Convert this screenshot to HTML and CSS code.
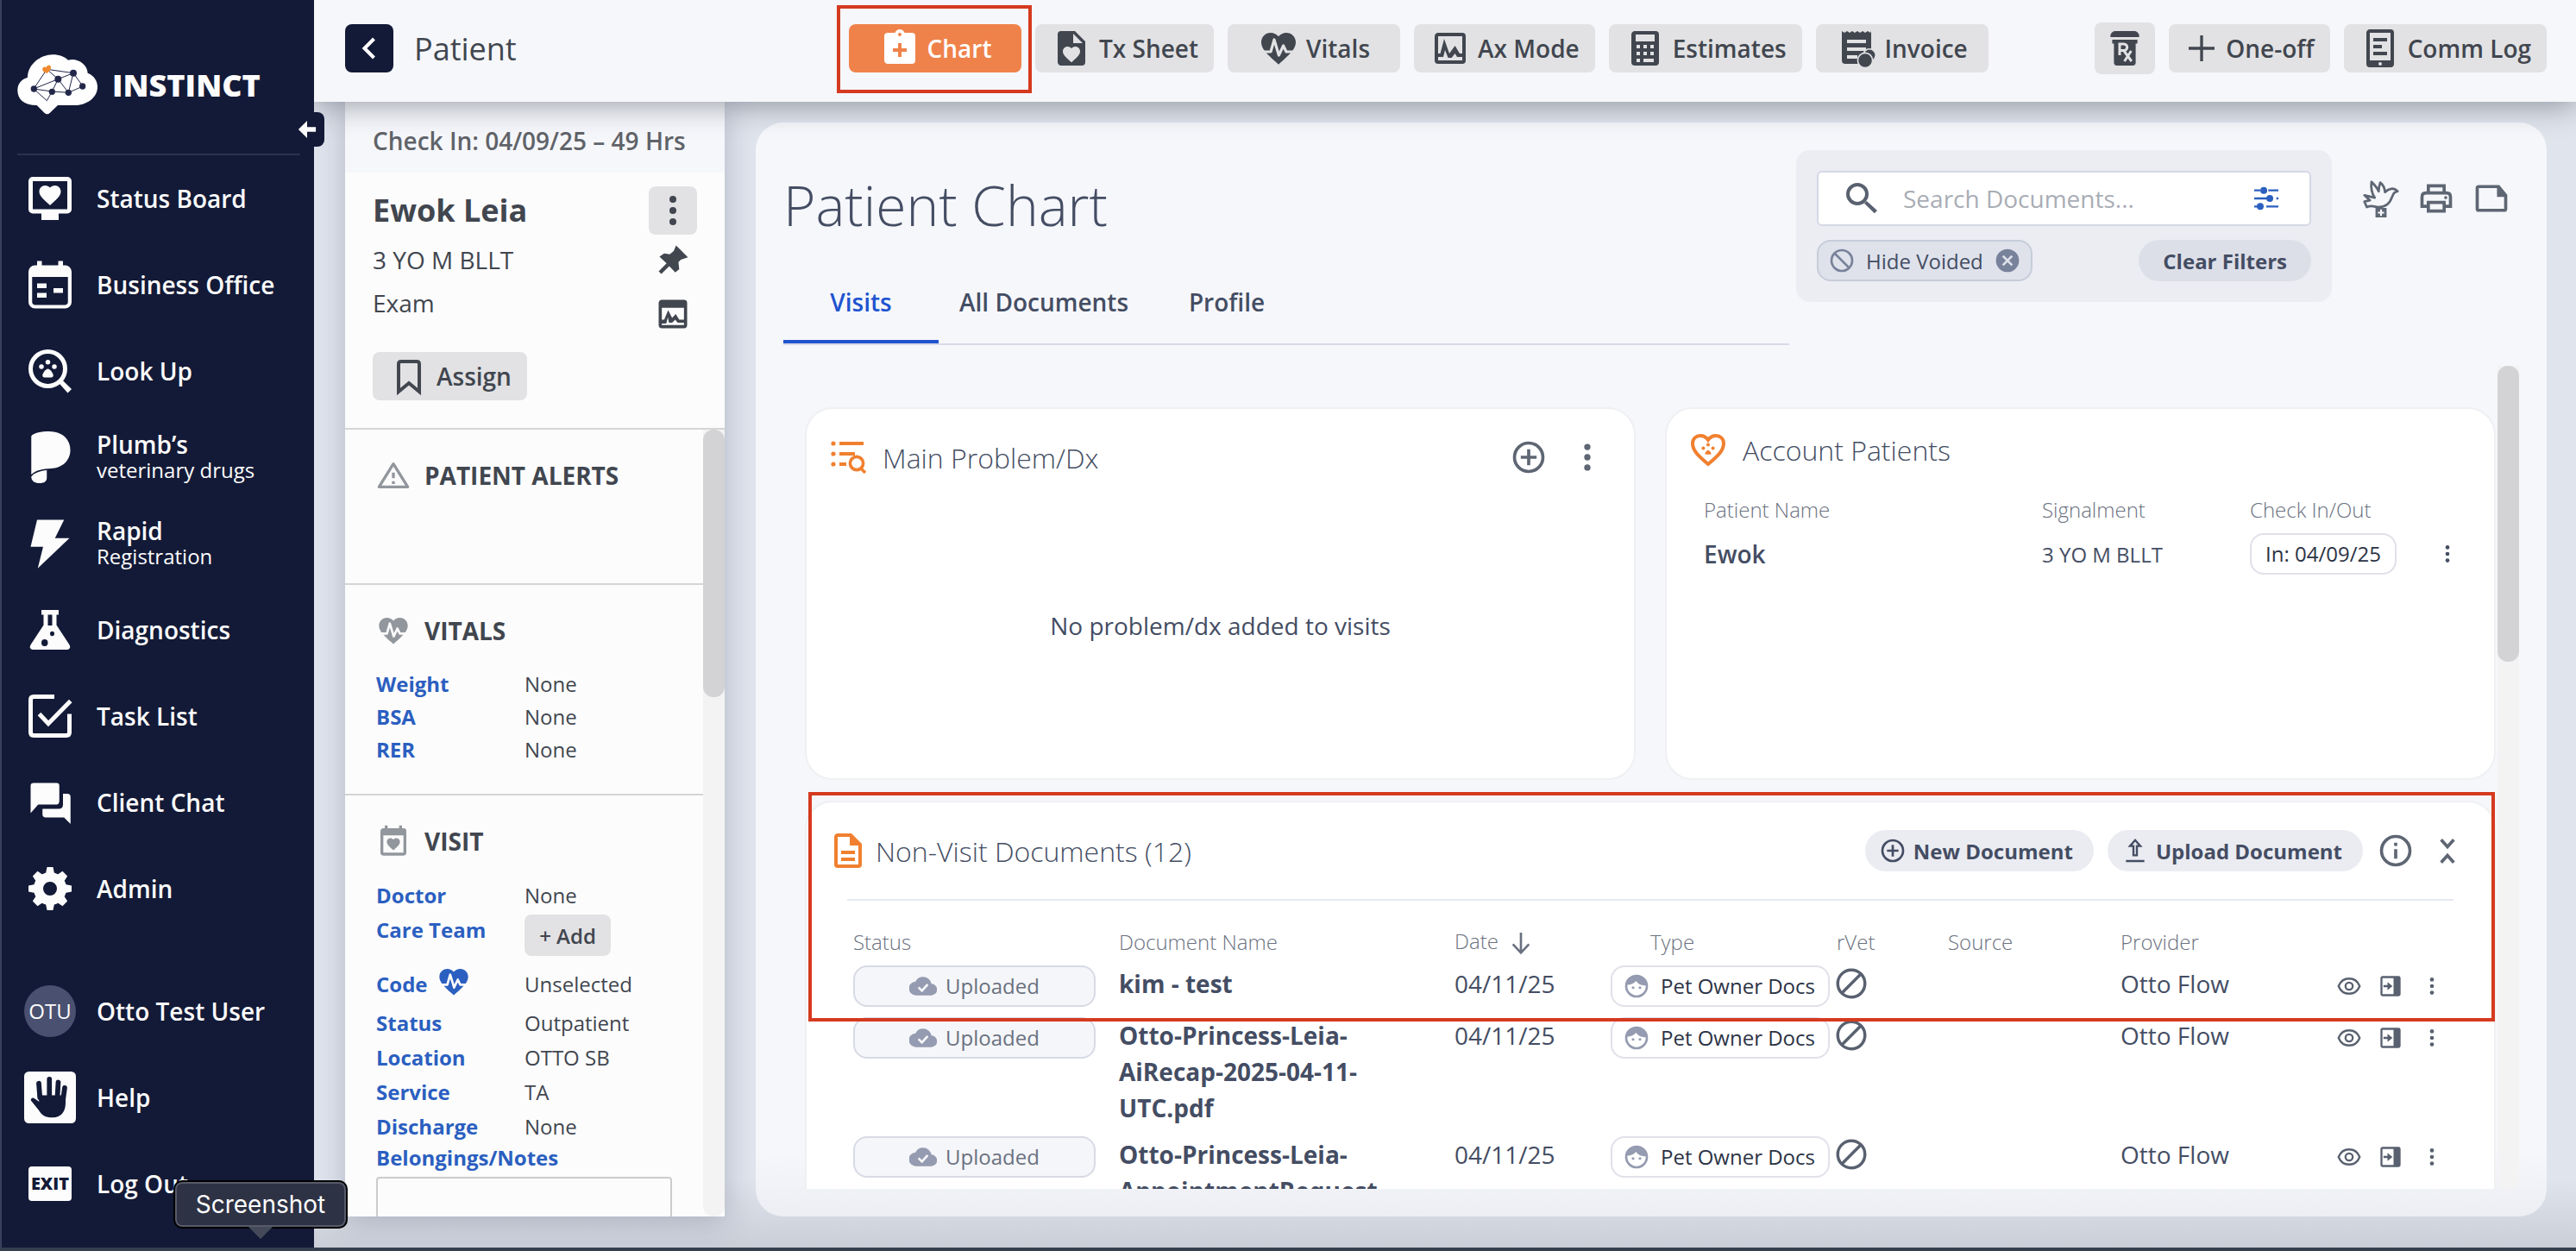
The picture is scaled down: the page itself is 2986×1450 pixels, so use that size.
FILE: index.html
```html
<!DOCTYPE html>
<html lang="en">
<head>
    <meta charset="UTF-8">
    <meta name="viewport" content="width=device-width, initial-scale=1.0">
    <title>Patient Chart</title>
    <link rel="stylesheet" href="styles.css">
</head>
<body>
    <!-- icon sprite -->
    <svg class="sprite" aria-hidden="true">
        <symbol id="i-heart" viewBox="0 0 24 24"><path d="M12 21.35 10.55 20C5.4 15.36 2 12.27 2 8.5 2 5.41 4.42 3 7.5 3c1.74 0 3.41.81 4.5 2.08C13.09 3.81 14.76 3 16.5 3 19.58 3 22 5.41 22 8.5c0 3.77-3.4 6.86-8.55 11.5z"/></symbol>
        <symbol id="i-board" viewBox="0 0 24 24">
            <path fill-rule="evenodd" d="M4 2h16a2 2 0 0 1 2 2v13a2 2 0 0 1-2 2h-4v3H8v-3H4a2 2 0 0 1-2-2V4a2 2 0 0 1 2-2zm0 2v13h16V4z"/>
            <use href="#i-heart" x="6" y="4.500" width="12" height="12"/>
        </symbol>
        <symbol id="i-office" viewBox="0 0 24 24"><path fill-rule="evenodd" d="M6 1h2.200v2h7.600V1H18v2h1a3 3 0 0 1 3 3v14a3 3 0 0 1-3 3H5a3 3 0 0 1-3-3V6a3 3 0 0 1 3-3h1zM3.700 8.400V20c0 .8.600 1.400 1.400 1.400h13.800c.8 0 1.400-.6 1.400-1.400V8.400zM6 11.400h4.400v2.200H6zm0 4.400h4.400V18H6zm7.600-2.200H18v2.200h-4.400z"/></symbol>
        <symbol id="i-lookup" viewBox="0 0 24 24">
            <circle cx="11" cy="11" r="8" fill="none" stroke="currentColor" stroke-width="2"/>
            <path d="m16.200 17.700 1.500-1.500 4.300 4.200-1.800 1.800z"/>
            <circle cx="11" cy="7.900" r="1.100"/><circle cx="8" cy="10" r="1.100"/><circle cx="14" cy="10" r="1.100"/>
            <path d="M11 11c1 0 2.500 2.200 2.500 3s-.6 1-1.200 1H9.700c-.7 0-1.200-.2-1.200-1s1.500-3 2.500-3z"/>
        </symbol>
        <symbol id="i-plumbs" viewBox="0 0 24 24">
            <path d="M3.300 2.200C4.500.6 8 0 11.500 0 17.600 0 21.400 3.600 21.400 8.700c0 5-3.900 8.300-8.900 8.500-3.600.2-7 .7-9.200 2.800z"/>
            <path d="M3.300 21c1.600-2 4.200-2.700 7.200-3v3.500c0 1.700-1.200 2.500-3.400 2.500s-3.800-1-3.800-3z"/>
        </symbol>
        <symbol id="i-bolt" viewBox="0 0 24 24"><path d="M6 1h12.500l-4.200 8.500H21L6.300 23.500l2.500-10H3z"/></symbol>
        <symbol id="i-flask" viewBox="0 0 24 24"><path fill-rule="evenodd" d="M8 2.800h8V5h-1v4.800l5.900 9c1 1.600 0 2.400-1.500 2.400H4.600c-1.500 0-2.500-.8-1.500-2.400l5.900-9V5H8zM11 5v5h2V5zm2 7.700a1 1.100 0 1 0 0 2.200 1 1.100 0 0 0 0-2.200zm-3.500 3.700a1.500 1.600 0 1 0 0 3.200 1.500 1.600 0 0 0 0-3.200z"/></symbol>
        <symbol id="i-task" viewBox="0 0 24 24"><path fill="none" stroke="currentColor" stroke-width="2" d="M14 3H4.500Q3 3 3 4.500v15Q3 21 4.500 21h15q1.500 0 1.500-1.500V11M7 11l4.200 4.500L21.500 5"/></symbol>
        <symbol id="i-chat" viewBox="0 0 24 24"><path d="M4.500 3H15q1.300 0 1.300 1.300v7Q16.300 13 15 13H6.500L3 17V4.300Q3 3 4.500 3zM18 8h2q1.500 0 1.500 1.500V22l-3-3H10q-1.500 0-1.500-1.500V15H16q2 0 2-2z"/></symbol>
        <symbol id="i-gear" viewBox="0 0 24 24">
            <path d="m9.800 6 .8-4h2.800l.8 4zm4.400 12-.8 4h-2.800l-.8-4z"/>
            <path transform="rotate(90 12 12)" d="m9.800 6 .8-4h2.800l.8 4zm4.400 12-.8 4h-2.800l-.8-4z"/>
            <path transform="rotate(45 12 12)" d="m9.600 6 .8-3.800h3.200l.8 3.800zm4.800 12-.8 3.800h-3.200L9.600 18z"/>
            <path transform="rotate(135 12 12)" d="m9.600 6 .8-3.800h3.200l.8 3.800zm4.800 12-.8 3.800h-3.200L9.600 18z"/>
            <circle cx="12" cy="12" r="5.400" fill="var(--cut)" stroke="currentColor" stroke-width="4.400"/>
        </symbol>
        <symbol id="i-hand" viewBox="0 0 24 24">
            <rect width="24" height="24" rx="2.200"/>
            <path d="M7.300 12 6.800 5.500M11.700 12V3.500M15.400 12l.4-7M18 13.500l.8-6" fill="none" stroke="var(--cut)" stroke-width="2.300" stroke-linecap="round"/>
            <path fill="var(--cut)" d="M6.200 11h13v3.500c0 4-2 6.800-6 6.800-3.500 0-5-1-6.500-3.500L3.200 13.500c-.4-1 .8-1.700 1.600-1L7 14z"/>
        </symbol>
        <symbol id="i-clip" viewBox="0 0 24 24"><path fill-rule="evenodd" d="M19 3h-4.180C14.400 1.840 13.300 1 12 1s-2.400.84-2.820 2H5a2 2 0 0 0-2 2v14c0 1.100.9 2 2 2h14a2 2 0 0 0 2-2V5a2 2 0 0 0-2-2zm-7 0a1 1 0 1 1 0 2 1 1 0 0 1 0-2zm-1 6h2v3h3v2h-3v3h-2v-3H8v-2h3z"/></symbol>
        <symbol id="i-tx" viewBox="0 0 24 24">
            <path fill-rule="evenodd" d="M14 2H6a2 2 0 0 0-2 2v16c0 1.100.9 2 2 2h12a2 2 0 0 0 2-2V8zm-1 1.500L18.500 9H13z"/>
            <use href="#i-heart" x="6" y="9.500" width="12" height="12" fill="var(--cut)"/>
        </symbol>
        <symbol id="i-pulse" viewBox="0 0 24 24">
            <use href="#i-heart" width="24" height="24"/>
            <path fill="none" stroke="var(--cut)" stroke-width="1.600" stroke-linejoin="round" d="M1 14h6.500L9.500 7l2.700 9 2.600-5.500L16.500 14H23"/>
        </symbol>
        <symbol id="i-ax" viewBox="0 0 24 24"><path fill-rule="evenodd" d="M5 3h14a2 2 0 0 1 2 2v14a2 2 0 0 1-2 2H5a2 2 0 0 1-2-2V5c0-1.100.9-2 2-2zm0 2v10h1.300L8.500 6.500 11.500 15l3.300-4.500L17.500 15H19V5zm0 12v2h14v-2h-3l-1.200-2-2 2.500h-2L9 13l-1 4z"/></symbol>
        <symbol id="i-wave" viewBox="0 0 24 24"><path fill-rule="evenodd" d="M5 3h14a2 2 0 0 1 2 2v14a2 2 0 0 1-2 2H5a2 2 0 0 1-2-2V5c0-1.100.9-2 2-2zm0 5v7.500h1.500L9 9.500l2.500 5 2.300-2.500 2.200 3.500h3V8zm0 10v1h14v-1.500h-4l-1.500-2-2 2h-2L8.800 14l-1 4z"/></symbol>
        <symbol id="i-calc" viewBox="0 0 24 24"><path fill-rule="evenodd" d="M6 2h12a2 2 0 0 1 2 2v16a2 2 0 0 1-2 2H6a2 2 0 0 1-2-2V4c0-1.100.9-2 2-2zm.5 2v4h11V4zM7 10v2h2v-2zm4 0v2h2v-2zm4 0v2h2v-2zm-8 4v2h2v-2zm4 0v2h2v-2zm4 0v2h2v-2zm-8 4v2h2v-2zm4 0v2h6v-2z"/></symbol>
        <symbol id="i-invoice" viewBox="0 0 24 24">
            <path fill-rule="evenodd" d="m3 2 1.500 1L6 2l1.500 1L9 2l1.500 1L12 2l1.500 1L15 2l1.500 1L18 2l1.500 1 .5-1v19H5a2 2 0 0 1-2-2zm3 5v2h11V7zm0 4.500v2h11v-2zM6 16v2h6v-2z"/>
            <circle cx="19" cy="16" r="3.600" stroke="var(--cut)" stroke-width=".8"/><circle cx="16.500" cy="19" r="4.300" stroke="var(--cut)" stroke-width=".8"/>
        </symbol>
        <symbol id="i-rx" viewBox="0 0 24 24">
            <path d="M3.700 5.500V4.300Q4.500 2 6.500 2h11q2 0 2.800 2.300v1.200zM4.700 7h14.600v2.300h-1v11q0 1.700-1.700 1.700H7.400q-1.700 0-1.700-1.700v-11h-1z"/>
            <path fill="none" stroke="var(--cut)" stroke-width="1.500" d="M9 16V9.500h2.500a1.800 1.800 0 0 1 0 3.700H9m2.300 0 4.600 6.300m-.2-6L11.800 19.500"/>
        </symbol>
        <symbol id="i-plus" viewBox="0 0 24 24"><path d="M11 3h2v8h8v2h-8v8h-2v-8H3v-2h8z"/></symbol>
        <symbol id="i-comm" viewBox="0 0 24 24"><path fill-rule="evenodd" d="M6 1h12a2 2 0 0 1 2 2v18a2 2 0 0 1-2 2H6a2 2 0 0 1-2-2V3c0-1.100.9-2 2-2zm0 2v16h12V3zm2 3h8v2H8zm0 4h5v2H8zm0 4h8v2H8zm4 6a1 1 0 1 0 0 2 1 1 0 0 0 0-2z"/></symbol>
        <symbol id="i-back" viewBox="0 0 24 24"><path fill="none" stroke="currentColor" stroke-width="2.200" d="m15 6-6 6 6 6"/></symbol>
        <symbol id="i-dots" viewBox="0 0 24 24"><circle cx="12" cy="5.500" r="2"/><circle cx="12" cy="12" r="2"/><circle cx="12" cy="18.500" r="2"/></symbol>
        <symbol id="i-pin" viewBox="0 0 24 24"><path d="m14 2.500 7.500 7.500-4.500 1.500-1.500 1.500.5 4.500-2.500 2-3.800-4-5 5-1.700-1.700 5-5-4.500-4.300 3-2 3.500.5L12.500 6z"/></symbol>
        <symbol id="i-bookmark" viewBox="0 0 24 24"><path fill="none" stroke="currentColor" stroke-width="2" d="M6 21V5q0-1.500 1.500-1.500h9Q18 3.500 18 5v16l-6-5z"/></symbol>
        <symbol id="i-alert" viewBox="0 0 24 24"><path fill="none" stroke="currentColor" stroke-width="2" stroke-linejoin="round" d="M12 4 2 20h20zM12 10v4M12 16v2"/></symbol>
        <symbol id="i-visit" viewBox="0 0 24 24">
            <path fill-rule="evenodd" d="M6 1h2v2h8V1h2v2h1a2 2 0 0 1 2 2v15a2 2 0 0 1-2 2H5a2 2 0 0 1-2-2V5c0-1.100.9-2 2-2h1zM5 8v12h14V8z"/>
            <use href="#i-heart" x="6.500" y="8.500" width="11" height="11"/>
        </symbol>
        <symbol id="i-search" viewBox="0 0 24 24"><circle cx="9.500" cy="9.500" r="5.500" fill="none" stroke="currentColor" stroke-width="2"/><path d="m13.500 14.900 1.400-1.400 6.100 5.500-1.600 1.600z"/></symbol>
        <symbol id="i-tune" viewBox="0 0 24 24"><path d="M0 3h6v2H0zM14 3h10v2H14zM0 11h13v2H0zM22 11h2v2h-2zM0 19h4v2H0zM12 19h12v2H12z"/><circle cx="9.500" cy="4" r="3.400"/><circle cx="15.500" cy="12" r="3.400"/><circle cx="6" cy="20" r="3.400"/></symbol>
        <symbol id="i-void" viewBox="0 0 24 24"><path fill="none" stroke="currentColor" stroke-width="2" d="M12 3a9 9 0 1 1 0 18 9 9 0 0 1 0-18zM5.600 5.600l12.800 12.800"/></symbol>
        <symbol id="i-none" viewBox="0 0 24 24"><path fill="none" stroke="currentColor" stroke-width="2" d="M12 3a9 9 0 1 1 0 18 9 9 0 0 1 0-18zM18.400 5.600 5.600 18.400"/></symbol>
        <symbol id="i-close" viewBox="0 0 24 24"><circle cx="12" cy="12" r="10"/><path stroke="var(--cut)" stroke-width="2" d="m8 8 8 8m0-8-8 8"/></symbol>
        <symbol id="i-dove" viewBox="0 0 24 24">
            <path fill="none" stroke="currentColor" stroke-width="1.500" stroke-linejoin="round" d="M1.500 10 8 11.500C6 8.500 5.500 5 6 1.500c2 2 3.500 3.500 4.500 6C10.500 5 11 3.500 11.500 2c2 1.500 2.800 3.500 3 6 2.500-2.500 5.500-3 8-.5-2 .5-2.500 1-3.500 3.500-1.500 4.500-4.500 6.500-8.500 6.500-3 0-4-1.500-7.500 0L1.500 14l3.500-.8z"/>
            <path fill-rule="evenodd" d="M8.500 18h7v6h-7zm2.900 1v1.400H10v1.200h1.400V23h1.200v-1.400H14v-1.200h-1.400V19z"/>
        </symbol>
        <symbol id="i-print" viewBox="0 0 24 24"><path fill="none" stroke="currentColor" stroke-width="2" d="M7 8V4h10v4M7 17H3v-6q0-2.500 2.500-2.500h13Q21 8.500 21 11v6h-4M7 14.500h10V20H7z"/><circle cx="18" cy="11.500" r="1"/></symbol>
        <symbol id="i-note" viewBox="0 0 24 24"><path fill="none" stroke="currentColor" stroke-width="2" d="M4 4.500h12.500L21 10v8.500q0 1-1 1H4q-1 0-1-1v-13q0-1 1-1z"/><path d="M15.500 4.500V11H21z"/></symbol>
        <symbol id="i-problem" viewBox="0 0 24 24"><path d="M7 3h14v2H7zM7 9h9v2H7zM7 15h4v2H7z"/><circle cx="3.500" cy="4" r="1.300"/><circle cx="3.500" cy="10" r="1.300"/><circle cx="3.500" cy="16" r="1.300"/><circle cx="17" cy="15.500" r="3.800" fill="none" stroke="currentColor" stroke-width="1.800"/><path stroke="currentColor" stroke-width="1.800" d="m19.500 18.500 2.500 2.500"/></symbol>
        <symbol id="i-addcircle" viewBox="0 0 24 24"><path fill="none" stroke="currentColor" stroke-width="2" d="M12 3a9 9 0 1 1 0 18 9 9 0 0 1 0-18zM12 7v10M7 12h10"/></symbol>
        <symbol id="i-petheart" viewBox="0 0 24 24">
            <path fill="none" stroke="currentColor" stroke-width="2" d="M12 20.500C6 15.500 3 12.500 3 8.500 3 5.700 5 4 7.500 4 9.500 4 11 5 12 6.500 13 5 14.500 4 16.500 4 19 4 21 5.700 21 8.500c0 4-3 7-9 12z"/>
            <circle cx="12" cy="9.300" r="1"/><circle cx="9.200" cy="11.200" r="1"/><circle cx="14.800" cy="11.200" r="1"/><path d="M12 12.300q2 1.200 1.700 2.600h-3.400Q10 13.500 12 12.300z"/>
        </symbol>
        <symbol id="i-doc" viewBox="0 0 24 24"><path fill-rule="evenodd" d="M6 2h8l6 6v12a2 2 0 0 1-2 2H6a2 2 0 0 1-2-2V4c0-1.100.9-2 2-2zm0 2v16h12V9h-5V4zm2 8h8v2H8zm0 4h8v2H8z"/></symbol>
        <symbol id="i-upload" viewBox="0 0 24 24"><path fill="none" stroke="currentColor" stroke-width="1.800" d="M10.500 16V8H7.500L12 2.800 16.500 8h-3v8zM4 21h16"/></symbol>
        <symbol id="i-info" viewBox="0 0 24 24"><path fill="none" stroke="currentColor" stroke-width="2" d="M12 3a9 9 0 1 1 0 18 9 9 0 0 1 0-18zM12 11v6M12 7v2"/></symbol>
        <symbol id="i-collapse" viewBox="0 0 24 24"><path fill="none" stroke="currentColor" stroke-width="2" d="m8 5 4 4.500L16 5M8 19.500l4-4.500 4 4.500"/></symbol>
        <symbol id="i-down" viewBox="0 0 24 24"><path fill="none" stroke="currentColor" stroke-width="2" d="M12 3v17M5 13l7 7.500L19 13"/></symbol>
        <symbol id="i-cloud" viewBox="0 0 24 24"><path d="M19.300 10A7.500 7.500 0 0 0 12 4a7.500 7.500 0 0 0-6.600 4A6 6 0 0 0 6 20h13a5 5 0 0 0 .3-10z"/><path fill="none" stroke="var(--cut)" stroke-width="2" d="m8 13 3 3 5-5.500"/></symbol>
        <symbol id="i-face" viewBox="0 0 24 24"><circle cx="12" cy="12" r="9" fill="none" stroke="currentColor" stroke-width="2"/><path d="M3 11C3 6 7 3 12 3s9 4 9 8.500c-4 0-7-.5-9.500-4C10 9.500 7 11 3 11z"/><circle cx="9" cy="13.300" r="1.200"/><circle cx="15" cy="13.300" r="1.200"/></symbol>
        <symbol id="i-eye" viewBox="0 0 24 24"><path fill="none" stroke="currentColor" stroke-width="2" d="M1.500 12c2-5 5.500-7.500 10.500-7.500S20.500 7 22.500 12c-2 5-5.500 7.500-10.500 7.500S3.500 17 1.500 12z"/><circle cx="12" cy="12" r="3.600" fill="none" stroke="currentColor" stroke-width="2"/></symbol>
        <symbol id="i-open" viewBox="0 0 24 24"><path fill-rule="evenodd" d="M4 2h16a2 2 0 0 1 2 2v16a2 2 0 0 1-2 2H4a2 2 0 0 1-2-2V4c0-1.100.9-2 2-2zm0 2v16h11V4zm1 7h4V8l5 4-5 4v-3H5z"/></symbol>
        <symbol id="i-arrow" viewBox="0 0 24 24"><path d="M1 12 12 1v8h11v6H12v8z"/></symbol>
    </svg>

    <div class="app">
        <aside class="sidebar">
            <div class="brand">
                <svg class="brand-mark" viewBox="62 70 282 210">
                    <path fill="#fff" d="M98 150c0-45 45-79 87-79 24 0 42 8 54 19 32-8 66 14 68 45 24 9 34 30 34 48 0 40-41 64-79 64h-59l-28 27q-9 8-18 0l-27-27c-45 0-67-22-67-52 0-24 15-39 35-45z"/>
                    <path class="brand-net" d="m165 122 92 13 33 46-50 22-57-4-64-9 46-68 39 34-85 34 46 41 18-32 21-43 53-21-17 68-36-47"/>
                    <g fill="#23284a"><circle cx="204" cy="156" r="12"/><circle cx="257" cy="135" r="12"/><circle cx="289" cy="181" r="11"/><circle cx="240" cy="203" r="11"/><circle cx="183" cy="200" r="11"/><circle cx="120" cy="190" r="11"/></g>
                    <path fill="#f08a30" d="M166 135c-14 0-22-16-12-21 4-2 8 1 9 2 2-9 12-11 15-5 4 8-3 18-12 24z"/>
                </svg>
                <span class="brand-name">INSTINCT</span>
            </div>
            <button class="collapse" aria-label="Collapse menu"><svg><use href="#i-arrow"/></svg></button>
            <nav class="menu">
                <a href="#"><svg><use href="#i-board"/></svg><span>Status Board</span></a>
                <a href="#"><svg><use href="#i-office"/></svg><span>Business Office</span></a>
                <a href="#"><svg><use href="#i-lookup"/></svg><span>Look Up</span></a>
                <a href="#"><svg><use href="#i-plumbs"/></svg><span>Plumb’s<small>veterinary drugs</small></span></a>
                <a href="#"><svg><use href="#i-bolt"/></svg><span>Rapid<small>Registration</small></span></a>
                <a href="#"><svg><use href="#i-flask"/></svg><span>Diagnostics</span></a>
                <a href="#"><svg><use href="#i-task"/></svg><span>Task List</span></a>
                <a href="#"><svg><use href="#i-chat"/></svg><span>Client Chat</span></a>
                <a href="#"><svg><use href="#i-gear"/></svg><span>Admin</span></a>
            </nav>
            <nav class="menu menu-user">
                <a href="#"><span class="avatar">OTU</span><span>Otto Test User</span></a>
                <a href="#"><svg><use href="#i-hand"/></svg><span>Help</span></a>
                <a href="#"><span class="exit"><b>EXIT</b></span><span>Log Out</span></a>
            </nav>
        </aside>

        <div class="page">
            <header class="topbar">
                <div class="topbar-title">
                    <button class="back" aria-label="Back"><svg><use href="#i-back"/></svg></button>
                    <span>Patient</span>
                </div>
                <nav class="modes">
                    <div class="marked">
                        <button class="btn active"><svg><use href="#i-clip"/></svg>Chart</button>
                        <div class="mark mark-chart"></div>
                    </div>
                    <button class="btn"><svg><use href="#i-tx"/></svg>Tx Sheet</button>
                    <button class="btn"><svg><use href="#i-pulse"/></svg>Vitals</button>
                    <button class="btn"><svg><use href="#i-ax"/></svg>Ax Mode</button>
                    <button class="btn"><svg><use href="#i-calc"/></svg>Estimates</button>
                    <button class="btn"><svg><use href="#i-invoice"/></svg>Invoice</button>
                </nav>
                <div class="actions">
                    <button class="btn btn-rx" aria-label="Prescriptions"><svg><use href="#i-rx"/></svg></button>
                    <button class="btn btn-small"><svg><use href="#i-plus"/></svg>One-off</button>
                    <button class="btn btn-small"><svg class="wide"><use href="#i-comm"/></svg>Comm Log</button>
                </div>
            </header>

            <main class="content">
                <section class="patient">
                    <div class="checkin">Check In: 04/09/25 – 49 Hrs</div>
                    <div class="summary">
                        <div class="summary-info">
                            <h2>Ewok Leia</h2>
                            <p>3 YO M BLLT</p>
                            <p>Exam</p>
                            <button class="btn assign"><svg><use href="#i-bookmark"/></svg>Assign</button>
                        </div>
                        <div class="summary-tools">
                            <button class="more" aria-label="More"><svg><use href="#i-dots"/></svg></button>
                            <svg><use href="#i-pin"/></svg>
                            <svg><use href="#i-wave"/></svg>
                        </div>
                    </div>
                    <div class="details">
                        <div class="details-list">
                            <section class="block block-alerts">
                                <h3><svg><use href="#i-alert"/></svg>PATIENT ALERTS</h3>
                            </section>
                            <section class="block block-vitals">
                                <h3><svg><use href="#i-pulse"/></svg>VITALS</h3>
                                <dl>
                                    <dt>Weight</dt><dd>None</dd>
                                    <dt>BSA</dt><dd>None</dd>
                                    <dt>RER</dt><dd>None</dd>
                                </dl>
                            </section>
                            <section class="block block-visit">
                                <h3><svg><use href="#i-visit"/></svg>VISIT</h3>
                                <dl>
                                    <dt>Doctor</dt><dd>None</dd>
                                    <dt class="tall">Care Team</dt><dd class="tall"><button class="add">+ Add</button></dd>
                                    <dt class="code">Code <svg><use href="#i-pulse"/></svg></dt><dd class="code">Unselected</dd>
                                    <dt>Status</dt><dd>Outpatient</dd>
                                    <dt>Location</dt><dd>OTTO SB</dd>
                                    <dt>Service</dt><dd>TA</dd>
                                    <dt>Discharge</dt><dd>None</dd>
                                </dl>
                                <label for="notes">Belongings/Notes</label>
                                <textarea id="notes"></textarea>
                            </section>
                        </div>
                        <div class="scrollbar"><div class="thumb thumb-details"></div></div>
                    </div>
                </section>

                <section class="chart">
                    <div class="chart-head">
                        <div class="chart-title">
                            <h1>Patient Chart</h1>
                            <div class="tabs">
                                <a class="tab current" href="#">Visits</a>
                                <a class="tab" href="#">All Documents</a>
                                <a class="tab" href="#">Profile</a>
                            </div>
                        </div>
                        <div class="filters">
                            <div class="search">
                                <svg><use href="#i-search"/></svg>
                                <input type="text" placeholder="Search Documents..." aria-label="Search Documents">
                                <button aria-label="Filter"><svg><use href="#i-tune"/></svg></button>
                            </div>
                            <div class="filters-row">
                                <button class="chip"><svg><use href="#i-void"/></svg>Hide Voided<svg class="chip-x"><use href="#i-close"/></svg></button>
                                <button class="pill pill-clear">Clear Filters</button>
                            </div>
                        </div>
                        <div class="chart-tools">
                            <button aria-label="Euthanasia"><svg><use href="#i-dove"/></svg></button>
                            <button aria-label="Print"><svg><use href="#i-print"/></svg></button>
                            <button aria-label="Note"><svg><use href="#i-note"/></svg></button>
                        </div>
                    </div>

                    <div class="chart-body">
                        <div class="chart-scroll">
                            <div class="cards">
                                <article class="card problem">
                                    <div class="card-head card-head-tall">
                                        <svg class="accent"><use href="#i-problem"/></svg>
                                        <h2>Main Problem/Dx</h2>
                                        <button class="icon-btn" aria-label="Add problem"><svg><use href="#i-addcircle"/></svg></button>
                                        <button class="icon-btn" aria-label="More"><svg><use href="#i-dots"/></svg></button>
                                    </div>
                                    <p class="empty">No problem/dx added to visits</p>
                                </article>
                                <article class="card">
                                    <div class="card-head">
                                        <svg class="accent"><use href="#i-petheart"/></svg>
                                        <h2>Account Patients</h2>
                                    </div>
                                    <table class="patients">
                                        <thead>
                                            <tr><th>Patient Name</th><th class="c-signal">Signalment</th><th class="c-check">Check In/Out</th><th class="c-more"></th></tr>
                                        </thead>
                                        <tbody>
                                            <tr>
                                                <td class="name">Ewok</td>
                                                <td>3 YO M BLLT</td>
                                                <td><span class="badge">In: 04/09/25</span></td>
                                                <td class="more-cell"><svg><use href="#i-dots"/></svg></td>
                                            </tr>
                                        </tbody>
                                    </table>
                                </article>
                            </div>

                            <article class="card docs">
                                <div class="mark mark-docs"></div>
                                <div class="card-head">
                                    <svg class="accent"><use href="#i-doc"/></svg>
                                    <h2>Non-Visit Documents (12)</h2>
                                    <button class="pill"><svg><use href="#i-addcircle"/></svg>New Document</button>
                                    <button class="pill"><svg><use href="#i-upload"/></svg>Upload Document</button>
                                    <button class="icon-btn" aria-label="Info"><svg><use href="#i-info"/></svg></button>
                                    <button class="icon-btn" aria-label="Collapse"><svg><use href="#i-collapse"/></svg></button>
                                </div>
                                <hr>
                                <table class="doc-table">
                                    <thead>
                                        <tr>
                                            <th class="c-status">Status</th>
                                            <th>Document Name</th>
                                            <th class="c-date">Date <svg><use href="#i-down"/></svg></th>
                                            <th class="c-type">Type</th>
                                            <th class="c-rvet">rVet</th>
                                            <th class="c-source">Source</th>
                                            <th class="c-provider">Provider</th>
                                            <th class="c-tools"></th>
                                        </tr>
                                    </thead>
                                    <tbody>
                                        <tr>
                                            <td><span class="status"><svg><use href="#i-cloud"/></svg>Uploaded</span></td>
                                            <td class="name">kim - test</td>
                                            <td>04/11/25</td>
                                            <td><span class="type"><svg><use href="#i-face"/></svg>Pet Owner Docs</span></td>
                                            <td><svg class="none"><use href="#i-none"/></svg></td>
                                            <td></td>
                                            <td>Otto Flow</td>
                                            <td><div class="row-tools"><svg><use href="#i-eye"/></svg><svg><use href="#i-open"/></svg><svg class="dots"><use href="#i-dots"/></svg></div></td>
                                        </tr>
                                        <tr>
                                            <td><span class="status"><svg><use href="#i-cloud"/></svg>Uploaded</span></td>
                                            <td class="name">Otto-Princess-Leia-AiRecap-2025-04-11-UTC.pdf</td>
                                            <td>04/11/25</td>
                                            <td><span class="type"><svg><use href="#i-face"/></svg>Pet Owner Docs</span></td>
                                            <td><svg class="none"><use href="#i-none"/></svg></td>
                                            <td></td>
                                            <td>Otto Flow</td>
                                            <td><div class="row-tools"><svg><use href="#i-eye"/></svg><svg><use href="#i-open"/></svg><svg class="dots"><use href="#i-dots"/></svg></div></td>
                                        </tr>
                                        <tr>
                                            <td><span class="status"><svg><use href="#i-cloud"/></svg>Uploaded</span></td>
                                            <td class="name">Otto-Princess-Leia-AppointmentRequest</td>
                                            <td>04/11/25</td>
                                            <td><span class="type"><svg><use href="#i-face"/></svg>Pet Owner Docs</span></td>
                                            <td><svg class="none"><use href="#i-none"/></svg></td>
                                            <td></td>
                                            <td>Otto Flow</td>
                                            <td><div class="row-tools"><svg><use href="#i-eye"/></svg><svg><use href="#i-open"/></svg><svg class="dots"><use href="#i-dots"/></svg></div></td>
                                        </tr>
                                    </tbody>
                                </table>
                            </article>
                        </div>
                        <div class="scrollbar"><div class="thumb thumb-chart"></div></div>
                    </div>
                </section>
            </main>
        </div>
        <div class="tooltip" role="tooltip">Screenshot</div>
    </div>
</body>
</html>
```
FILE: styles.css
```css
* {
    box-sizing: border-box;
}
body {
    margin: 0;
    font-family: "Open Sans", "Noto Sans", sans-serif;
    font-size: 28px;
    color: #444d63;
    background-color: #e0e4ed;
}
h1, h2, h3, p, dl, dd {
    margin: 0;
}
button, input, textarea {
    font-family: inherit;
    color: inherit;
}
button {
    padding: 0;
    border: none;
    background: none;
    cursor: pointer;
}
a {
    color: inherit;
    text-decoration: none;
}
svg {
    display: block;
    flex: none;
    fill: currentColor;
}
.sprite {
    position: absolute;
    width: 0;
    height: 0;
}
.app {
    position: relative;
    display: flex;
    height: 100vh;
    overflow: hidden;
    border-bottom: 4px solid #353f50;
}

/* sidebar */
.sidebar {
    --cut: #131a37;
    position: relative;
    z-index: 3;
    flex: none;
    width: 364px;
    border-left: 2px solid #3a405b;
    background-color: #131a37;
    color: #fcfcfc;
}
.brand {
    display: flex;
    align-items: center;
    gap: 16px;
    height: 180px;
    margin: 0 16px 0 18px;
    padding-top: 18px;
    border-bottom: 2px solid #2b314d;
}
.brand-mark {
    width: 94px;
    height: 70px;
}
.brand-net {
    fill: none;
    stroke: #23284a;
    stroke-width: 3;
}
.brand-name {
    font-size: 36px;
    font-weight: 800;
}
.collapse {
    position: absolute;
    top: 130px;
    right: -12px;
    width: 40px;
    height: 40px;
    padding-left: 9px;
    border-radius: 0 8px 8px 0;
    background-color: #131a37;
}
.collapse svg {
    width: 22px;
    height: 22px;
}
.menu a {
    display: flex;
    align-items: center;
    gap: 24px;
    height: 100px;
    padding-left: 26px;
    font-weight: 600;
    line-height: 30px;
    white-space: nowrap;
}
.menu svg {
    width: 60px;
    height: 60px;
}
.menu small {
    display: block;
    font-size: 24px;
    font-weight: 400;
}
.menu-user {
    margin-top: 42px;
}
.avatar {
    width: 60px;
    height: 60px;
    border-radius: 50%;
    background-color: #4a5170;
    font-size: 24px;
    font-weight: 500;
    line-height: 60px;
    text-align: center;
}
.exit {
    width: 60px;
}
.exit b {
    display: block;
    width: 50px;
    height: 40px;
    margin: 0 auto;
    border-radius: 4px;
    background-color: #fcfcfc;
    color: #131a37;
    font-size: 20px;
    font-weight: 800;
    line-height: 40px;
    text-align: center;
}

/* top bar */
.page {
    flex: 1;
    display: flex;
    flex-direction: column;
    min-width: 0;
}
.topbar {
    --cut: #e2e2e4;
    position: relative;
    z-index: 2;
    display: flex;
    height: 118px;
    padding: 28px 34px 0 36px;
    background-color: #f6f7fb;
    box-shadow: 0 4px 32px rgba(40, 48, 60, 0.45);
    color: #41464f;
}
.topbar-title {
    display: flex;
    flex: none;
    gap: 24px;
    width: 584px;
    font-size: 36px;
    line-height: 58px;
}
.back {
    width: 56px;
    height: 56px;
    border-radius: 8px;
    background-color: #131a37;
    color: #fff;
}
.back svg {
    width: 44px;
    height: 44px;
    margin: 0 auto;
}
.modes, .actions {
    display: flex;
    gap: 16px;
    height: 56px;
}
.modes {
    flex: 1;
}
.actions {
    align-items: center;
}
.marked {
    position: relative;
}
.mark {
    position: absolute;
    z-index: 1;
    border: 4px solid #d53a20;
    pointer-events: none;
}
.mark-chart {
    inset: -22px -12px -24px -14px;
}
.btn {
    display: flex;
    align-items: center;
    justify-content: center;
    gap: 8px;
    min-width: 200px;
    height: 56px;
    padding: 0 18px;
    border-radius: 8px;
    background-color: #e2e2e4;
    font-size: 28px;
    font-weight: 600;
    white-space: nowrap;
}
.btn svg {
    width: 48px;
    height: 48px;
}
.btn.active {
    background-color: #ef824a;
    color: #fff;
}
.btn-small {
    min-width: 0;
}
.btn-small svg {
    width: 40px;
}
.btn-small .wide {
    width: 48px;
}
.btn-rx {
    min-width: 70px;
    height: 60px;
    padding: 0;
}

/* patient column */
.content {
    flex: 1;
    display: flex;
    gap: 36px;
    min-height: 0;
    padding: 0 34px 36px 36px;
    background: linear-gradient(rgba(40, 48, 60, 0), rgba(40, 48, 60, 0.12)) bottom / 100% 80px no-repeat;
}
.patient {
    display: flex;
    flex: none;
    flex-direction: column;
    width: 440px;
    background-color: #fcfcfc;
    box-shadow: 0 4px 32px rgba(40, 48, 80, 0.25);
    color: #41464f;
}
.checkin {
    height: 82px;
    padding: 8px 0 0 32px;
    background-color: #f6f7fb;
    color: #606369;
    font-weight: 600;
    line-height: 74px;
}
.summary {
    display: flex;
    justify-content: space-between;
    height: 298px;
    padding: 16px 31px 0 32px;
    border-bottom: 2px solid #d5d5d7;
}
.summary h2 {
    margin-bottom: 4px;
    font-size: 36px;
    font-weight: 700;
    line-height: 56px;
}
.summary p {
    line-height: 50px;
}
.assign {
    min-width: 0;
    margin-top: 32px;
}
.summary-tools {
    display: flex;
    flex-direction: column;
    align-items: center;
    width: 58px;
}
.summary-tools > svg {
    width: 44px;
    height: 44px;
    margin: 8px 0 10px;
}
.more {
    width: 56px;
    height: 56px;
    border-radius: 8px;
    background-color: #e2e2e4;
}
.more svg {
    width: 48px;
    height: 48px;
    margin: 0 auto;
}
.details {
    flex: 1;
    display: flex;
    min-height: 0;
}
.details-list {
    flex: 1;
    overflow: hidden;
}
.scrollbar {
    width: 25px;
    border-radius: 0 0 12px 12px;
    background-color: #f3f3f3;
}
.thumb {
    border-radius: 12px;
    background-color: #d3d3d5;
}
.thumb-details {
    height: 34%;
}
.thumb-chart {
    height: 36%;
}
.block {
    padding: 37px 0 0 36px;
    border-bottom: 2px solid #d5d5d7;
}
.block-alerts {
    height: 180px;
}
.block-vitals {
    height: 244px;
}
.block-visit {
    border-bottom: none;
}
.block h3 {
    display: flex;
    gap: 16px;
    align-items: center;
    margin-bottom: 27px;
    font-size: 28px;
    font-weight: 700;
    line-height: 32px;
}
.block h3 svg {
    width: 40px;
    height: 40px;
    margin: -4px 0;
    color: #92969d;
}
.block svg {
    --cut: #fcfcfc;
}
.block dl {
    display: grid;
    grid-template-columns: 172px 1fr;
    font-size: 24px;
    line-height: 40px;
}
.block-vitals dl {
    line-height: 38px;
}
.block dt, .block label {
    color: #2b5fc0;
    font-weight: 700;
}
.block .tall {
    height: 60px;
}
.block .code {
    display: flex;
    gap: 10px;
    height: 48px;
    line-height: 46px;
}
.code svg {
    width: 40px;
    height: 40px;
}
.add {
    display: block;
    width: 100px;
    height: 48px;
    margin-top: 2px;
    border-radius: 8px;
    background-color: #e2e2e4;
    font-size: 24px;
    font-weight: 600;
}
.block label {
    display: block;
    margin-bottom: 6px;
    font-size: 24px;
    line-height: 32px;
}
.block textarea {
    display: block;
    width: calc(100% - 36px);
    height: 120px;
    border: 2px solid #ccc;
    border-radius: 4px;
    background-color: #fcfcfc;
    resize: none;
}

/* chart panel */
.chart {
    flex: 1;
    display: flex;
    flex-direction: column;
    min-width: 0;
    margin-top: 24px;
    padding: 32px;
    border-radius: 32px;
    background: linear-gradient(#f6f7fb, #f6f7fb 94%, #edeef3);
}
.chart-head {
    display: flex;
    height: 250px;
}
.chart-title {
    flex: 1;
    height: 226px;
    margin-right: 8px;
    border-bottom: 2px solid #d8dae8;
}
.chart-title h1 {
    margin: 20px 0;
    font-size: 64px;
    font-weight: 300;
    line-height: 88px;
}
.tabs {
    display: flex;
}
.tab {
    min-width: 180px;
    height: 96px;
    padding: 0 24px;
    font-weight: 600;
    line-height: 96px;
    text-align: center;
}
.tab.current {
    border-bottom: 4px solid #2053d0;
    color: #2053d0;
}
.filters {
    width: 621px;
    height: 176px;
    padding: 24px;
    border-radius: 16px;
    background-color: #ecedf3;
}
.search {
    display: flex;
    align-items: center;
    height: 64px;
    padding: 0 36px 0 26px;
    border: 2px solid #d5d8e5;
    border-radius: 6px;
    background-color: #fff;
}
.search > svg {
    width: 48px;
    height: 48px;
    color: #596170;
}
.search input {
    flex: 1;
    min-width: 0;
    padding: 0 0 0 24px;
    border: none;
    outline: none;
    background: none;
    font-size: 28px;
}
.search input::placeholder {
    color: #a9adb5;
}
.search button svg {
    width: 28px;
    height: 28px;
    color: #2b5fc0;
}
.filters-row {
    display: flex;
    justify-content: space-between;
    margin-top: 16px;
}
.chip {
    --cut: #dfe2eb;
    display: flex;
    align-items: center;
    gap: 12px;
    height: 48px;
    padding: 0 11px;
    border: 2px solid #c7ccda;
    border-radius: 16px;
    background-color: #dfe2eb;
    font-size: 24px;
}
.chip svg {
    width: 32px;
    height: 32px;
    color: #78829a;
}
.pill {
    display: flex;
    align-items: center;
    gap: 8px;
    height: 48px;
    padding: 0 24px 0 16px;
    border-radius: 24px;
    background-color: #ebecf2;
    font-size: 24px;
    font-weight: 700;
    white-space: nowrap;
}
.pill svg {
    width: 32px;
    height: 32px;
}
.pill-clear {
    padding: 0 28px;
    background-color: #dddfe8;
}
.chart-tools {
    display: flex;
    height: 112px;
    margin-left: 25px;
    color: #5e6673;
}
.chart-tools button {
    width: 64px;
}
.chart-tools svg {
    width: 44px;
    height: 44px;
    margin: 0 auto;
}
.chart-body {
    flex: 1;
    display: flex;
    gap: 2px;
    min-height: 0;
    margin-left: 25px;
}
.chart-scroll {
    flex: 1;
    min-width: 0;
    overflow: hidden;
    padding-top: 48px;
}
.cards {
    display: grid;
    grid-template-columns: 1fr 1fr;
    gap: 34px;
    margin-bottom: 24px;
}
.card {
    position: relative;
    display: flex;
    flex-direction: column;
    min-height: 432px;
    padding: 24px 24px 14px;
    border: 2px solid #eff0f2;
    border-radius: 32px;
    background-color: #fff;
}
.card-head {
    display: flex;
    align-items: center;
    gap: 16px;
    height: 46px;
}
.card-head-tall {
    height: 64px;
}
.card-head h2 {
    flex: 1;
    font-size: 32px;
    font-weight: 300;
}
.accent {
    width: 48px;
    height: 48px;
    color: #f08030;
}
.icon-btn svg {
    width: 44px;
    height: 44px;
    color: #5e6673;
}
.icon-btn + .icon-btn {
    margin: 0 8px;
}
.empty {
    display: flex;
    flex: 1;
    align-items: center;
    justify-content: center;
}
table {
    border-collapse: collapse;
    table-layout: fixed;
}
th, td {
    padding: 0;
    text-align: left;
}
th {
    color: #6a7180;
    font-size: 24px;
    font-weight: 300;
}
.name {
    font-weight: 700;
}
.patients {
    width: calc(100% - 19px);
    margin: 24px 0 0 19px;
    font-size: 24px;
}
.patients th {
    height: 44px;
}
.patients td {
    height: 60px;
}
.patients .name {
    font-size: 28px;
    font-weight: 600;
}
.c-signal {
    width: 241px;
}
.c-check {
    width: 199px;
}
.c-more {
    width: 60px;
}
.badge {
    display: inline-block;
    height: 48px;
    padding: 0 16px;
    border: 2px solid #e0e1e9;
    border-radius: 16px;
    color: #2c3346;
    line-height: 44px;
}
.more-cell svg {
    width: 28px;
    height: 28px;
    margin: 0 auto;
}
.docs {
    padding: 24px 24px 0;
}
.docs .card-head {
    height: 64px;
}
.docs h2 {
    margin-left: -8px;
}
.docs .icon-btn + .icon-btn {
    margin: 0 8px 0 0;
}
.docs hr {
    width: calc(100% - 46px);
    height: 2px;
    margin: 24px 23px 0;
    border: none;
    background-color: #e6e9f0;
}
.mark-docs {
    top: -12px;
    right: -1px;
    left: 2px;
    height: 266px;
}
.doc-table {
    width: calc(100% - 54px);
    margin-left: 30px;
}
.doc-table th {
    height: 75px;
    padding-top: 20px;
}
.doc-table th svg {
    display: inline-block;
    width: 32px;
    height: 32px;
    margin-left: 4px;
    vertical-align: middle;
}
.doc-table td {
    padding-bottom: 12px;
    line-height: 42px;
    vertical-align: top;
}
.doc-table .name {
    padding-right: 78px;
}
.c-status {
    width: 308px;
}
.c-date {
    width: 181px;
}
.c-type {
    width: 262px;
}
.doc-table .c-type {
    padding-left: 46px;
}
.c-rvet {
    width: 129px;
}
.c-source {
    width: 200px;
}
.c-provider {
    width: 241px;
}
.c-tools {
    width: 144px;
}
.status, .type {
    display: flex;
    align-items: center;
    height: 48px;
    border: 2px solid #d8dae5;
    border-radius: 16px;
    font-size: 24px;
}
.status {
    --cut: #f5f6f9;
    justify-content: center;
    gap: 10px;
    width: 281px;
    background-color: #f5f6f9;
    color: #6a7180;
}
.type {
    gap: 12px;
    width: 254px;
    padding-left: 12px;
    border-color: #e0e1e9;
    color: #2c3346;
}
.status svg, .type svg {
    width: 32px;
    height: 32px;
    color: #959bb0;
}
.none {
    width: 44px;
    height: 42px;
    margin-left: -5px;
    color: #596170;
}
.row-tools {
    display: flex;
    align-items: center;
    height: 48px;
    color: #596170;
}
.row-tools svg {
    width: 28px;
    height: 28px;
    margin: 0 10px;
}

/* tooltip over the page */
.tooltip {
    position: absolute;
    z-index: 4;
    left: 201px;
    bottom: 22px;
    width: 202px;
    height: 56px;
    border: 2px solid #000;
    border-radius: 10px;
    background-color: #2d3244;
    box-shadow: inset 0 0 0 2px #565a69;
    color: #fff;
    font-family: Inter, sans-serif;
    line-height: 52px;
    text-align: center;
}
.tooltip::after {
    content: "";
    position: absolute;
    top: 52px;
    left: 85px;
    border: 14px solid transparent;
    border-top-color: #454a5a;
    border-bottom: none;
}
```
